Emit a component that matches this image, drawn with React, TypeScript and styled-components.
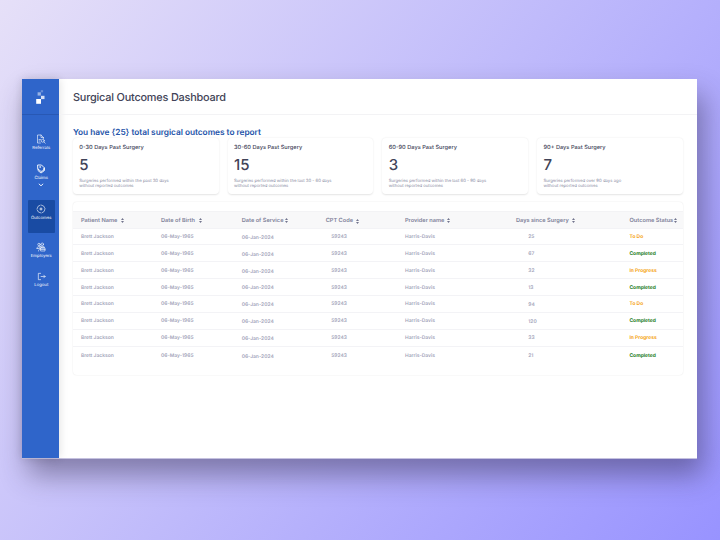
import React from "react";
import styled, { createGlobalStyle } from "styled-components";

const GlobalStyle = createGlobalStyle`
  * { box-sizing: border-box; }
  body {
    margin: 0;
    font-family: Inter, "Liberation Sans", sans-serif;
    text-rendering: geometricPrecision;
    -webkit-font-smoothing: antialiased;
  }
`;

const Page = styled.div`
  width: 720px;
  height: 540px;
  padding: 79px 23px 0 22.4px;
  overflow: hidden;
  background: linear-gradient(127deg, #e6e0f8 0%, #bfbafb 50%, #9893ff 100%);
`;

const Window = styled.div`
  display: flex;
  height: 380px;
  background: #fff;
  border-bottom: 1px solid #c5c1df;
  box-shadow: 6px 16px 26px rgba(40, 35, 65, 0.44);
`;

const Sidebar = styled.nav`
  width: 36.6px;
  flex: none;
  background: #2f65ca;
  color: #fff;
  box-shadow: 0 0 9px rgba(0, 0, 0, 0.14);
`;

const LogoBox = styled.div`
  height: 35.5px;
  padding: 11px 0 0 14px;
  border-bottom: 1px solid #2858b4;
  svg { display: block; }
`;

const NavItem = styled.a<{ $gap: number; $active?: boolean }>`
  display: flex;
  flex-direction: column;
  align-items: center;
  width: 26.6px;
  height: ${(p) => (p.$active ? 33 : 26)}px;
  margin: ${(p) => p.$gap}px 0 0 5.6px;
  padding-top: ${(p) => (p.$active ? 3.3 : 0)}px;
  border-radius: 1px;
  background: ${(p) => (p.$active ? "#194ba3" : "transparent")};
  svg { display: block; flex: none; }
`;

const NavLabel = styled.span`
  margin-top: 2px;
  font-size: 4.25px;
  line-height: 5px;
  white-space: nowrap;
`;

const Content = styled.main`
  flex: 1;
  min-width: 0;
`;

const Header = styled.header`
  height: 35.5px;
  padding-left: 14px;
  border-bottom: 1px solid #f3f3f5;
`;

const Title = styled.h1`
  margin: 0;
  font-size: 10.9px;
  line-height: 36px;
  letter-spacing: -0.2px;
  font-weight: 500;
  color: #424357;
`;

const Body = styled.div`
  padding: 11px 14.3px 0 14px;
`;

const Summary = styled.h2`
  margin: 0;
  padding-top: 1px;
  height: 12.5px;
  font-size: 8.35px;
  line-height: 12.5px;
  letter-spacing: -0.05px;
  font-weight: 600;
  color: #2454a9;
`;

const Cards = styled.div`
  display: grid;
  grid-template-columns: repeat(4, 1fr);
  gap: 9.2px;
`;

const Card = styled.section`
  height: 56px;
  padding: 6px 6.3px 0;
  border-radius: 4px;
  box-shadow: 0 0.4px 1.8px rgba(0, 0, 0, 0.11);
`;

const CardTitle = styled.h3`
  margin: 0;
  font-size: 5.65px;
  line-height: 8px;
  font-weight: 500;
  color: #414358;
`;

const Count = styled.div`
  margin-top: 4px;
  font-size: 15px;
  line-height: 18px;
  font-weight: 500;
  color: #414358;
`;

const Note = styled.p`
  margin: 5px 0 0;
  font-size: 4.25px;
  line-height: 5.1px;
  color: #85879e;
  white-space: nowrap;
`;

const Table = styled.div`
  height: 173.5px;
  margin-top: 7.5px;
  padding-top: 9.5px;
  border-radius: 4px;
  box-shadow: 0 0 1.5px rgba(0, 0, 0, 0.13);
`;

const Row = styled.div<{ $head?: boolean }>`
  display: grid;
  grid-template-columns: 80px 80.7px 84px 79.3px 111px 113.5px 1fr;
  align-items: center;
  height: ${(p) => (p.$head ? 17.5 : 16.93)}px;
  padding: 1.6px 0 0 8px;
  background: ${(p) => (p.$head ? "#f8f8f9" : "transparent")};
  border-top: ${(p) => (p.$head ? "1px solid #f3f3f5" : "0")};
  border-bottom: 1px solid #f3f3f6;
  &:last-child { border-bottom: 0; }
`;

const HeadCell = styled.div<{ $drop?: number; $gap?: number }>`
  display: flex;
  align-items: center;
  gap: ${(p) => p.$gap ?? 3}px;
  padding-top: ${(p) => (p.$drop ?? 0) * 2}px;
  font-size: 5.65px;
  line-height: 8px;
  font-weight: 600;
  color: #80829a;
  white-space: nowrap;
`;

const tones: Record<string, string> = {
  "To Do": "#f5a623",
  "In Progress": "#f5a623",
  Completed: "#1c7c1c",
};

const Cell = styled.div<{ $tone?: string; $indent?: number; $drop?: number }>`
  padding-left: ${(p) => p.$indent ?? 0}px;
  padding-top: ${(p) => (p.$drop ?? 0) * 2}px;
  font-size: 4.95px;
  line-height: 7px;
  font-weight: ${(p) => (p.$tone ? 700 : 600)};
  color: ${(p) => p.$tone ?? "#a3a5ba"};
  white-space: nowrap;
`;

const SortIcon = () => (
  <svg width="3" height="5" viewBox="0 0 6 10" fill="#73758e">
    <path d="M3 0 6 4H0ZM0 6h6L3 10Z" />
  </svg>
);

const Logo = () => (
  <svg width="10" height="15" viewBox="0 0 10 15">
    <rect x="0.2" y="9" width="4.8" height="4.8" fill="#fff" />
    <rect x="5" y="5.8" width="3.5" height="3.3" fill="#fff" opacity=".8" />
    <rect x="1.6" y="2.3" width="3.3" height="3.3" fill="#fff" opacity=".5" />
    <rect x="4.8" y="0.2" width="2.3" height="2.1" fill="#fff" opacity=".28" />
  </svg>
);

const Icon = ({ size = 10, children }: { size?: number; children: React.ReactNode }) => (
  <svg
    width={size}
    height={size}
    viewBox="0 0 20 20"
    fill="none"
    stroke="#fff"
    strokeWidth="1.2"
    strokeLinecap="round"
    strokeLinejoin="round"
  >
    {children}
  </svg>
);

const ReferralIcon = () => (
  <Icon>
    <path d="M9 18H3V2h7l5 5v2M10 2v5h5M6 11h3M6 14h2" />
    <circle cx="13.5" cy="13.5" r="3" />
    <path d="m16 16 2.5 2.5" />
  </Icon>
);

const ClaimIcon = () => (
  <Icon>
    <path d="M4 2h7l5 5-1 6-5 2-6-5Z" strokeWidth="1.8" />
    <path d="M4 10v3l6 5 7-5V8" strokeWidth="1.8" />
    <circle cx="8" cy="6" r="1" />
  </Icon>
);

const OutcomeIcon = () => (
  <Icon>
    <circle cx="10" cy="10" r="8" strokeDasharray="10 2.5" />
    <path d="M10 7.8v4.4M7.8 10h4.4" strokeWidth="1.6" />
  </Icon>
);

const EmployerIcon = () => (
  <Icon>
    <circle cx="6" cy="5" r="2.5" />
    <circle cx="12.5" cy="4.5" r="2.5" />
    <path d="M2 13c0-3 2-4.5 4.5-4.5M9 8.5h5c2 0 3 1 3 2.5M2 13h4" />
    <circle cx="8.5" cy="11" r="2" />
    <path d="M5 18c0-3 1.5-4 4-4M10 12h8v6h-8ZM12.5 12v-1.5h3V12M10 15h8" />
  </Icon>
);

const LogoutIcon = () => (
  <Icon size={9}>
    <path d="M8 3H3v14h5M9 10h9M15 7l3 3-3 3" strokeWidth="1.4" />
  </Icon>
);

const Chevron = styled.svg`
  margin-top: 2.7px;
`;

const cards = [
  ["0-30 Days Past Surgery", "5", "Surgeries performed within the past 30 days"],
  ["30-60 Days Past Surgery", "15", "Surgeries performed within the last 30 - 60 days"],
  ["60-90 Days Past Surgery", "3", "Surgeries performed within the last 60 - 90 days"],
  ["90+ Days Past Surgery", "7", "Surgeries performed over 90 days ago"],
];

const columns = [
  { label: "Patient Name", gap: 3.2 },
  { label: "Date of Birth", gap: 3.6 },
  { label: "Date of Service", gap: 1.6, drop: 0.4 },
  { label: "CPT Code", gap: 3.4, drop: 0.8 },
  { label: "Provider name", gap: 3 },
  { label: "Days since Surgery", gap: 3.6, drop: 0.2 },
  { label: "Outcome Status", gap: 1 },
];

const rows: [number, string][] = [
  [25, "To Do"],
  [67, "Completed"],
  [32, "In Progress"],
  [13, "Completed"],
  [94, "To Do"],
  [120, "Completed"],
  [33, "In Progress"],
  [21, "Completed"],
];

export default function App() {
  return (
    <>
      <GlobalStyle />
      <Page>
        <Window>
          <Sidebar>
            <LogoBox><Logo /></LogoBox>
            <NavItem $gap={19.6}><ReferralIcon /><NavLabel>Referrals</NavLabel></NavItem>
            <NavItem $gap={3.5}>
              <ClaimIcon />
              <NavLabel>Claims</NavLabel>
              <Chevron width="6" height="4" viewBox="0 0 6 4" fill="none" stroke="#fff" strokeWidth="0.9">
                <path d="m0.8 0.8 2.2 2 2.2-2" />
              </Chevron>
            </NavItem>
            <NavItem $gap={10.7} $active><OutcomeIcon /><NavLabel>Outcomes</NavLabel></NavItem>
            <NavItem $gap={9.2}><EmployerIcon /><NavLabel>Employers</NavLabel></NavItem>
            <NavItem $gap={4}><LogoutIcon /><NavLabel>Logout</NavLabel></NavItem>
          </Sidebar>
          <Content>
            <Header><Title>Surgical Outcomes Dashboard</Title></Header>
            <Body>
              <Summary>You have {"{25}"} total surgical outcomes to report</Summary>
              <Cards>
                {cards.map(([title, count, note]) => (
                  <Card key={title}>
                    <CardTitle>{title}</CardTitle>
                    <Count>{count}</Count>
                    <Note>{note}<br />without reported outcomes</Note>
                  </Card>
                ))}
              </Cards>
              <Table>
                <Row $head>
                  {columns.map((c) => (
                    <HeadCell key={c.label} $gap={c.gap} $drop={c.drop}>{c.label}<SortIcon /></HeadCell>
                  ))}
                </Row>
                {rows.map(([days, status], i) => (
                  <Row key={i}>
                    <Cell>Brett Jackson</Cell>
                    <Cell>06-May-1965</Cell>
                    <Cell $drop={0.9}>06-Jan-2024</Cell>
                    <Cell $indent={5.5}>59243</Cell>
                    <Cell>Harris-Davis</Cell>
                    <Cell $indent={12.3} $drop={0.2}>{days}</Cell>
                    <Cell $tone={tones[status]}>{status}</Cell>
                  </Row>
                ))}
              </Table>
            </Body>
          </Content>
        </Window>
      </Page>
    </>
  );
}
